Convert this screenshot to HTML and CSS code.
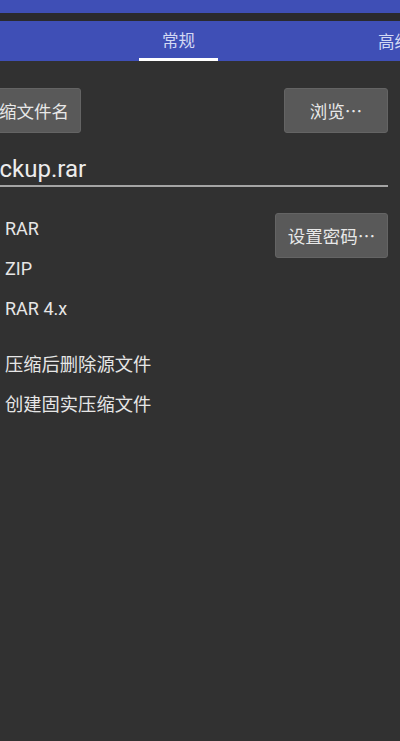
FILE: index.html
```html
<!DOCTYPE html>
<html lang="zh">
<head>
    <meta charset="UTF-8">
    <meta name="viewport" content="width=device-width, initial-scale=1.0">
    <title>压缩选项</title>
    <link rel="stylesheet" href="styles.css">
</head>
<body>
    <div class="status-bar"></div>
    <div class="status-gap"></div>

    <div class="tabs">
        <div class="tab active">常规</div>
        <div class="tab tab-next">高级</div>
    </div>

    <div class="page">
        <div class="row-top">
            <button class="btn btn-name">压缩文件名</button>
            <button class="btn btn-browse">浏览<span class="dots">…</span></button>
        </div>

        <div class="file-input">backup.rar</div>

        <div class="row-format">
            <div class="options">
                <div class="option">RAR</div>
                <div class="option">ZIP</div>
                <div class="option">RAR 4.x</div>
            </div>
            <button class="btn btn-password">设置密码<span class="dots">…</span></button>
        </div>

        <div class="options checks">
            <div class="option cjk">压缩后删除源文件</div>
            <div class="option cjk">创建固实压缩文件</div>
        </div>
    </div>
</body>
</html>
```

FILE: styles.css
```css
body { margin: 0; width: 400px; height: 741px; overflow: hidden; background-color: #313131; color: #e6e6e6; font-family: Roboto, "Noto Sans CJK SC", sans-serif; }
.status-bar { height: 13px; background-color: #3f4fb6; }
.status-gap { height: 8px; background-color: #2a2a2e; }

/* Вкладки */
.tabs { display: flex; height: 40px; background-color: #3f4fb6; padding-left: 139px; box-sizing: border-box; white-space: nowrap; }
.tab { width: 79px; text-align: center; font-size: 16.5px; line-height: 44px; color: #d3d8f3; box-sizing: border-box; flex-shrink: 0; }
.tab.active { border-bottom: 3px solid #ffffff; line-height: 41px; }
.tab-next { margin-left: 137px; }

.page { padding-top: 27px; }

.btn { font-family: Roboto, "Noto Sans CJK SC", sans-serif; font-size: 17.5px; color: #e8e8e8; background-color: #595959; border: 1px solid #646464; border-radius: 3px; height: 45px; padding: 0; box-sizing: border-box; white-space: nowrap; }
.dots { font-family: "Noto Sans CJK SC", sans-serif; }

.row-top { display: flex; justify-content: space-between; padding-right: 12px; }
.btn-name { width: 110px; margin-left: -29px; text-align: right; padding-right: 11px; }
.btn-browse { width: 104px; }

.file-input { margin: 20px 12px 0 -27px; font-size: 24px; line-height: 32px; height: 32px; border-bottom: 2px solid #a4a4a4; color: #ececec; }

.row-format { display: flex; justify-content: space-between; align-items: flex-start; margin-top: 22px; padding-right: 12px; }
.btn-password { width: 113px; margin-top: 4px; }

.options { padding-left: 5px; }
.option { font-size: 18px; line-height: 40px; height: 40px; white-space: nowrap; }
.option.cjk { font-size: 18.3px; }
.checks { margin-top: 16px; }
```
